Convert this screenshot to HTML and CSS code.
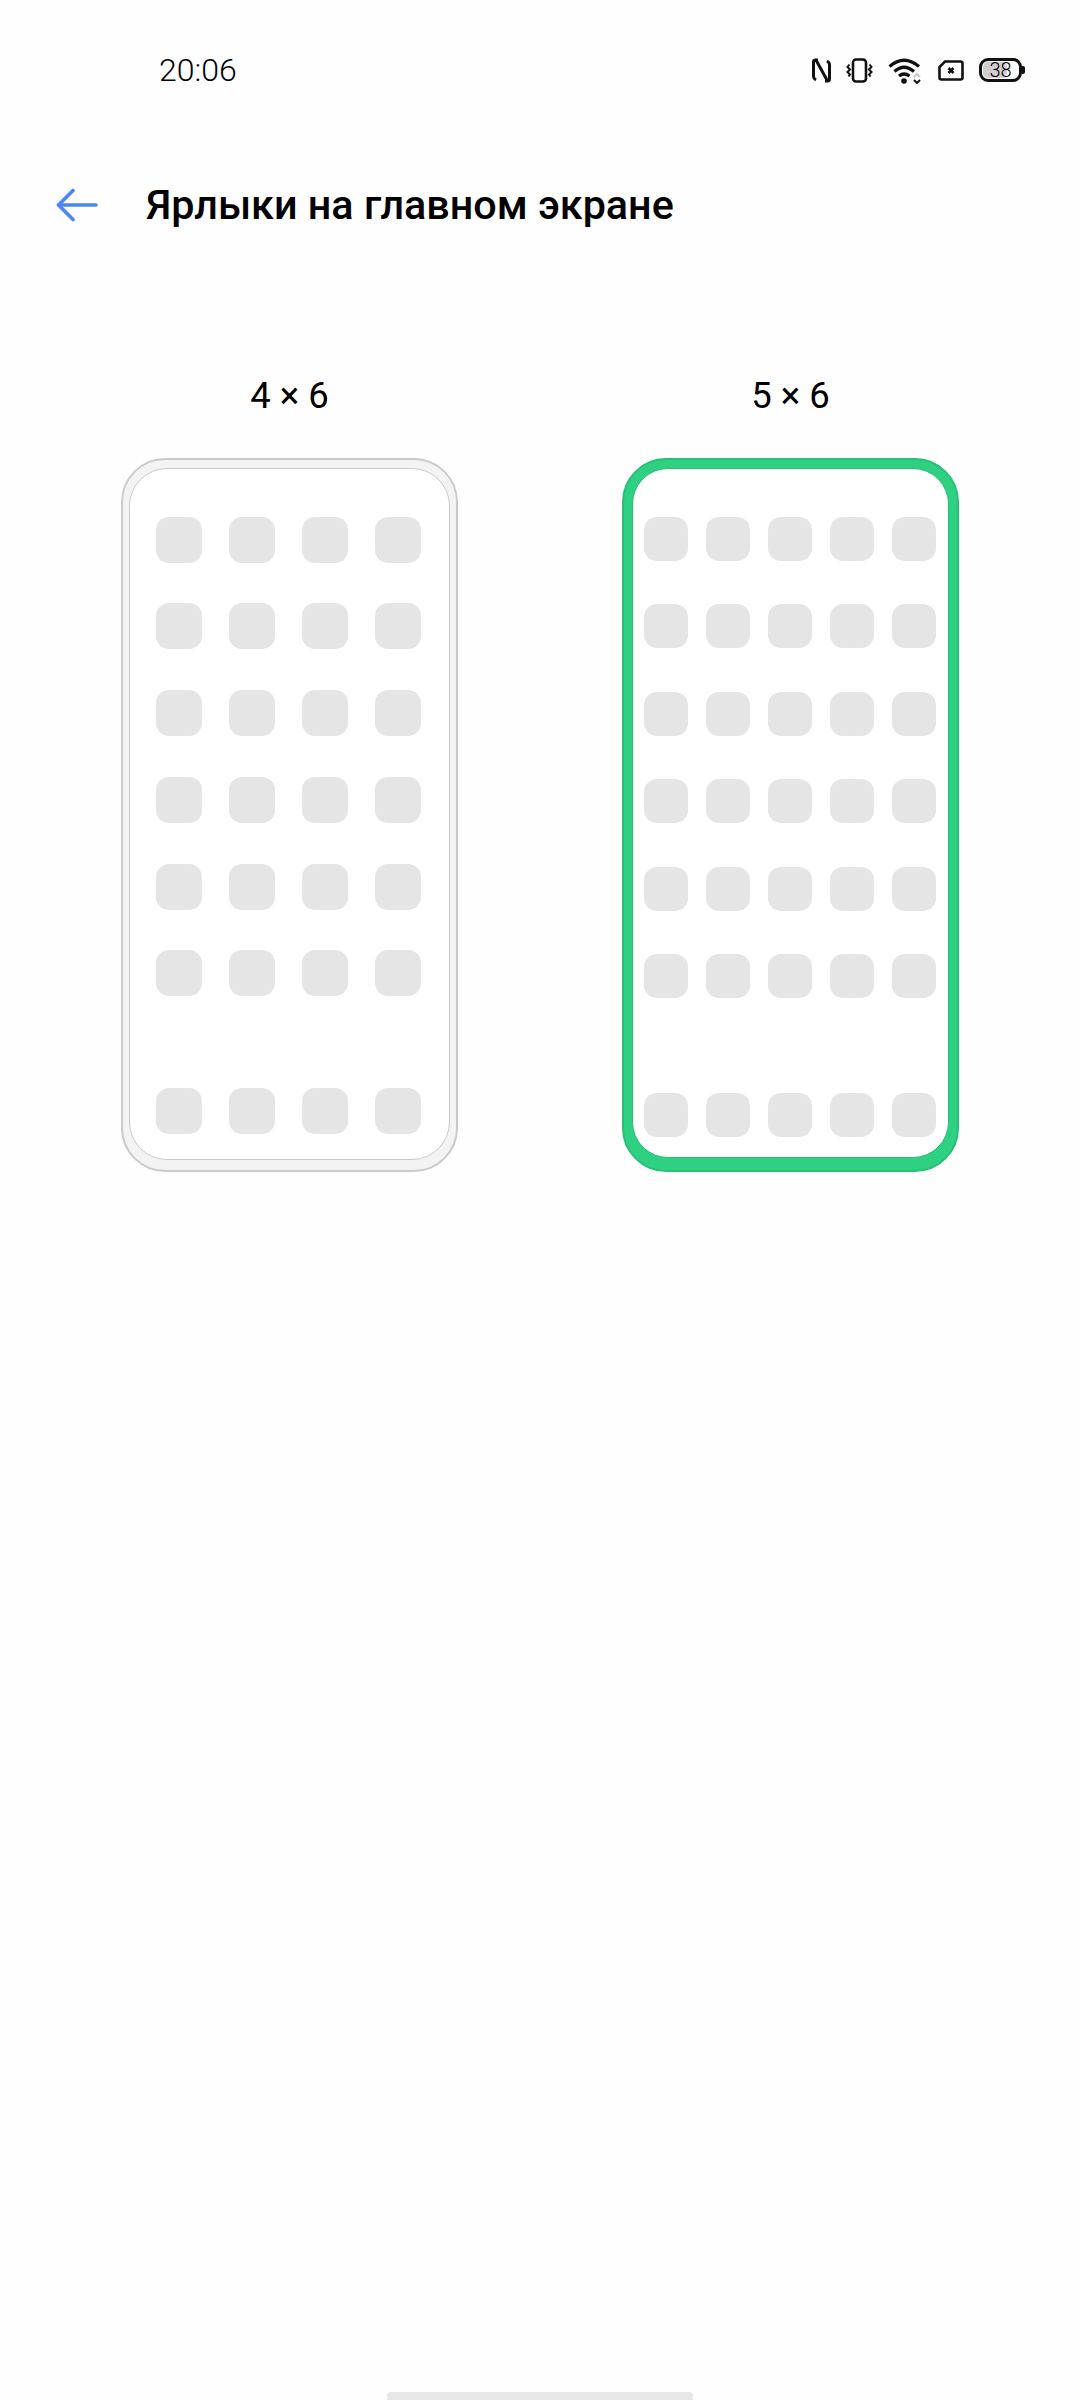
FILE: index.html
```html
<!DOCTYPE html>
<html lang="ru">
<head>
    <meta charset="UTF-8">
    <meta name="viewport" content="width=device-width, initial-scale=1.0">
    <title>Ярлыки на главном экране</title>
    <link rel="stylesheet" href="styles.css">
</head>
<body>
    <div class="status-bar">
        <span class="time">20:06</span>
        <div class="status-icons">
            <svg class="icon-nfc" width="19" height="25" viewBox="0 0 19 25" fill="none" stroke="#111" stroke-width="3" stroke-linejoin="round">
                <path d="M6 2H3.5Q1.5 2 1.5 4V18.5Q1.5 20.5 4 22"/>
                <path d="M4 2L15.5 23"/>
                <path d="M13 23H15.5Q17.5 23 17.5 21V6.5Q17.5 4.5 15 3"/>
            </svg>
            <svg class="icon-vibrate" width="27" height="25" viewBox="0 0 27 25" fill="none" stroke="#111" stroke-width="2.6">
                <rect x="7" y="1.5" width="13" height="22" rx="3"/>
                <path d="M3.5 6.5L1.5 9L4 11.5L1.5 14L4 16.5L2.5 18.5" stroke-width="2"/>
                <path d="M23.5 6.5L25.5 9L23 11.5L25.5 14L23 16.5L24.5 18.5" stroke-width="2"/>
            </svg>
            <svg class="icon-wifi" width="35" height="27" viewBox="0 0 35 27" fill="none" stroke="#111" stroke-width="3.2">
                <path d="M1.5 9.5Q16 -3 31 9.5"/>
                <path d="M6.5 14.5Q16 6 26 14.5"/>
                <path d="M11 19Q16 15 21.5 19"/>
                <circle cx="16" cy="24" r="2.8" fill="#111" stroke="none"/>
                <path d="M26 20L29 17L32 20" stroke="#c8c8c8" stroke-width="2"/>
                <path d="M26 23L29 26L32 23" stroke-width="2"/>
            </svg>
            <svg class="icon-sim" width="26" height="21" viewBox="0 0 26 21" fill="none" stroke="#111" stroke-width="2.6">
                <path d="M7 1.5H22.5Q24.5 1.5 24.5 3.5V17.5Q24.5 19.5 22.5 19.5H3.5Q1.5 19.5 1.5 17.5V7Z"/>
                <path d="M10.5 8L15.5 13M15.5 8L10.5 13"/>
            </svg>
            <div class="battery">
                <div class="battery-level"></div>
                <span class="battery-text">38</span>
            </div>
        </div>
    </div>

    <div class="header">
        <svg class="back" width="42" height="34" viewBox="0 0 42 34" fill="none" stroke="#4a87f2" stroke-width="3.6" stroke-linecap="round" stroke-linejoin="round">
            <path d="M40 17H3"/>
            <path d="M17 2.5L2.5 17L17 31.5"/>
        </svg>
        <h1>Ярлыки на главном экране</h1>
    </div>

    <div class="layouts">
        <div class="layout">
            <div class="label">4 × 6</div>
            <div class="phone">
                <div class="screen cols-4" id="grid4"></div>
            </div>
        </div>
        <div class="layout selected">
            <div class="label">5 × 6</div>
            <div class="phone">
                <div class="screen cols-5" id="grid5"></div>
            </div>
        </div>
    </div>

    <div class="home-bar"></div>

    <script>
        // fill both previews: 6 rows of app tiles plus the dock row
        function fillGrid(id, cols) {
            const screen = document.getElementById(id);
            for (let i = 0; i < cols * 7; i++) {
                const tile = document.createElement('div');
                tile.className = 'tile';
                screen.appendChild(tile);
            }
        }
        fillGrid('grid4', 4);
        fillGrid('grid5', 5);
    </script>
</body>
</html>
```

FILE: styles.css
```css
* {
    margin: 0;
    padding: 0;
    box-sizing: border-box;
}

body {
    font-family: Roboto, "Noto Sans", sans-serif;
    background: #fefefe;
    color: #000;
    width: 1080px;
    height: 2400px;
    overflow: hidden;
    position: relative;
}

.status-bar {
    height: 112px;
    padding: 52px 58px 0 159px;
    display: flex;
    justify-content: space-between;
    align-items: flex-start;
}

.time {
    font-size: 32px;
    font-weight: 300;
    line-height: 36px;
}

.status-icons {
    display: flex;
    align-items: center;
    gap: 15px;
    height: 36px;
}

.battery {
    width: 43px;
    height: 24px;
    border: 3px solid #111;
    border-radius: 9px;
    position: relative;
    display: flex;
    align-items: center;
    justify-content: center;
}

.battery::after {
    content: "";
    position: absolute;
    right: -6px;
    top: 5px;
    width: 3px;
    height: 8px;
    background: #111;
    border-radius: 0 2px 2px 0;
}

.battery-level {
    position: absolute;
    left: 1px;
    top: 1px;
    bottom: 1px;
    width: 24px;
    background: #cfcfcf;
    border-radius: 5px;
}

.battery-text {
    position: relative;
    font-size: 20px;
    font-weight: 300;
    line-height: 18px;
}

.header {
    display: flex;
    align-items: center;
    height: 62px;
    margin-top: 62px;
    padding-left: 56px;
    gap: 48px;
}

.header h1 {
    font-size: 41.3px;
    font-weight: 500;
}

.layouts {
    display: flex;
    padding: 139px 0 0 121px;
    gap: 164px;
}

.layout {
    width: 337px;
}

.label {
    font-size: 36.5px;
    line-height: 42px;
    text-align: center;
    margin-bottom: 41px;
}

.phone {
    height: 714px;
    padding: 8px 6px 10px;
    background: #f3f3f3;
    border: 2px solid #cacaca;
    border-radius: 44px;
}

.screen {
    height: 100%;
    background: #fff;
    border: 1.5px solid #cacaca;
    border-radius: 38px;
    display: grid;
    justify-content: center;
    align-content: start;
    padding: 47.5px 2px 0 0;
    row-gap: 40.8px;
}

.cols-4 {
    grid-template-columns: repeat(4, 46px);
    grid-auto-rows: 46px;
    column-gap: 27px;
}

.cols-5 {
    grid-template-columns: repeat(5, 44px);
    grid-auto-rows: 44px;
    column-gap: 18px;
    row-gap: 43.4px;
}

.tile {
    background: #e5e5e5;
    border-radius: 13px;
}

/* dock row sits apart from the app rows */
.cols-4 .tile:nth-child(n+25) {
    margin-top: 51px;
    margin-bottom: -51px;
}

.cols-5 .tile:nth-child(n+31) {
    margin-top: 51.6px;
    margin-bottom: -51.6px;
}

.selected .phone {
    padding: 8px 8px 12px;
    background: #2dd181;
    border-color: #28bf77;
}

.selected .screen {
    border: 1px solid #28bf77;
    border-radius: 36px;
    padding: 48px 1px 0 0;
}

.home-bar {
    position: absolute;
    left: 387px;
    bottom: 0;
    width: 306px;
    height: 8px;
    background: #e8e8e8;
    border-radius: 4px 4px 0 0;
}
```
